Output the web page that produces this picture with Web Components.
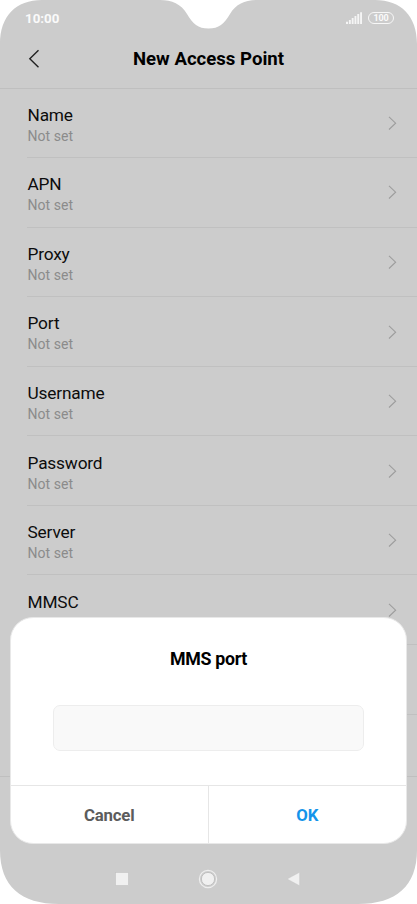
<!DOCTYPE html>
<html lang="en"><head><meta charset="utf-8"><title>New Access Point</title>
<style>html,body{margin:0;background:#fff}body{width:417px;height:904px;overflow:hidden;font-family:Roboto,"Liberation Sans",sans-serif}</style></head>
<body>
<phone-screen>
<status-bar slot="status" time="10:00" battery="100"></status-bar>
<title-bar>New Access Point</title-bar>
<settings-list>
<setting-row label="Name">Not set</setting-row>
<setting-row label="APN">Not set</setting-row>
<setting-row label="Proxy">Not set</setting-row>
<setting-row label="Port">Not set</setting-row>
<setting-row label="Username">Not set</setting-row>
<setting-row label="Password">Not set</setting-row>
<setting-row label="Server">Not set</setting-row>
<setting-row label="MMSC"></setting-row>
<setting-row></setting-row>
</settings-list>
<input-dialog slot="dialog" heading="MMS port"><span slot="cancel">Cancel</span><span slot="ok">OK</span></input-dialog>
<nav-bar slot="nav"></nav-bar>
</phone-screen>
<script>
const define=(name,html,init)=>customElements.define(name,class extends HTMLElement{
 constructor(){super();const t=document.createElement('template');t.innerHTML=html;this.attachShadow({mode:'open'}).append(t.content.cloneNode(true));}
 connectedCallback(){if(init)init(this,this.shadowRoot);}
});
define('phone-screen',`<style>
:host{display:flex;flex-direction:column;position:relative;isolation:isolate;width:417px;height:904px;overflow:hidden}
.bg{position:absolute;inset:0;z-index:-1}
main{flex:1;min-height:0;overflow:hidden}
.overlay{position:absolute;left:10px;top:617px;z-index:2}
.nav{position:absolute;left:0;right:0;bottom:0;height:50px;z-index:2}
.bottomline{height:127px;border-top:1px solid #bfbfbf}
</style>
<svg class="bg" width="417" height="904"><path fill="#ccc" d="M42 0H160C172 0 181 4 187 14C193 24 198 28.5 208.5 28.5C219 28.5 224 24 230 14C236 4 245 0 257 0H375C401 0 417 16 417 44V850C417 886 396 904 358 904H59C21 904 0 886 0 850V44C0 16 16 0 42 0Z"/></svg>
<slot name="status"></slot><main><slot></slot></main><div class="bottomline"></div>
<div class="overlay"><slot name="dialog"></slot></div><div class="nav"><slot name="nav"></slot></div>`);
define('status-bar',`<style>
:host{display:flex;align-items:center;justify-content:space-between;height:37px;flex:none;padding:0 23px 0 25px;box-sizing:border-box;color:#fafafa}
.time{font-size:13.3px;font-weight:700;letter-spacing:0}
.right{display:flex;gap:6px;align-items:center;margin-top:-1px}
.bat{box-sizing:border-box;width:26px;height:12px;border:1px solid #f7f7f7;border-radius:6px;font:700 9px/10px Roboto,sans-serif;letter-spacing:-.2px;text-align:center}
</style><span class="time"></span><span class="right"><svg width="16" height="12" fill="#f5f5f5"><path d="M0 9.8h2V12H0zM2.9 8h1.9v4H2.9zM5.7 6h1.9v6H5.7zM8.5 4h1.9v8H8.5zM11.3 2h1.9v10h-1.9zM14.1 .3H16V12h-1.9z"/></svg><span class="bat"></span></span>`,(h,r)=>{r.querySelector('.time').textContent=h.getAttribute('time');r.querySelector('.bat').textContent=h.getAttribute('battery');});
define('title-bar',`<style>
:host{display:grid;grid-template-columns:66px 1fr 66px;align-items:center;height:51.6px;box-sizing:border-box;border-bottom:1px solid #bfbfbf;padding-bottom:6.6px}
h1{margin:0;text-align:center;font-size:18.6px;font-weight:700;line-height:24px;white-space:nowrap}
svg{margin-left:28px}
</style><svg width="12" height="20" fill="none" stroke="#222" stroke-width="1.4"><path d="M10.5 1.2L1.8 9.7l8.7 8.5"/></svg><h1><slot></slot></h1>`);
define('settings-list',`<style>:host{display:block}</style><slot></slot>`);
define('setting-row',`<style>
:host{display:flex;box-sizing:border-box;height:69.55px;margin-left:27px;border-bottom:1px solid #c0c0c0;justify-content:space-between;align-items:center;padding-right:20px}
.text{padding:2.8px 0 0 .5px}
.label{font-size:17.3px;line-height:22px;color:#0c0c0c;letter-spacing:-.18px}
.value{font-size:14px;line-height:18px;min-height:18px;color:#8b8b8b;letter-spacing:.05px;margin-top:1px}
</style><div class="text"><div class="label"></div><div class="value"><slot></slot></div></div><svg width="9" height="14" fill="none" stroke="#9d9d9d" stroke-width="1.1"><path d="M1 .9L7.6 7.2 1 13.5"/></svg>`,(h,r)=>{r.querySelector('.label').textContent=h.getAttribute('label')||'';});
define('input-dialog',`<style>
:host{display:flex;flex-direction:column;width:397px;height:227px;box-sizing:border-box;border-radius:23px;background:#fff;border:1px solid #e8e8e8;overflow:hidden}
h2{margin:29px 0 0;text-align:center;font-size:17.8px;letter-spacing:-.32px;line-height:24px;font-weight:700}
.field{box-sizing:border-box;margin:34px 42px 0;height:46px;border:1px solid #ededed;border-radius:7px;background:#f9f9f9}
.actions{display:grid;grid-template-columns:1fr 1fr;margin-top:auto;height:57px;border-top:1px solid #e6e6e6;font-size:16.8px;letter-spacing:-.2px;font-weight:700;line-height:59px;text-align:center}
.cancel{color:#5c5c5c;border-right:1px solid #e6e6e6}.ok{color:#1494ea}
</style><h2></h2><div class="field"></div><div class="actions"><div class="cancel"><slot name="cancel"></slot></div><div class="ok"><slot name="ok"></slot></div></div>`,(h,r)=>{r.querySelector('h2').textContent=h.getAttribute('heading');});
define('nav-bar',`<style>
:host{display:flex;height:50px;justify-content:center;align-items:center;gap:69px;padding-right:1px}svg{display:block}
</style><svg width="14" height="14"><rect x=".5" y=".5" width="13" height="13" fill="#f0f0f0" stroke="#c2c2c2" stroke-width=".6"/></svg><svg width="20" height="20"><circle cx="10" cy="10" r="8.6" fill="none" stroke="#eee" stroke-width="1.2"/><circle cx="10" cy="10" r="6.6" fill="#f0f0f0" stroke="#bdbdbd" stroke-width=".9"/></svg><svg width="14" height="14"><path d="M.2 7L12.6 .2v13.6z" fill="#f0f0f0" stroke="#c2c2c2" stroke-width=".4"/></svg>`);
</script></body></html>
